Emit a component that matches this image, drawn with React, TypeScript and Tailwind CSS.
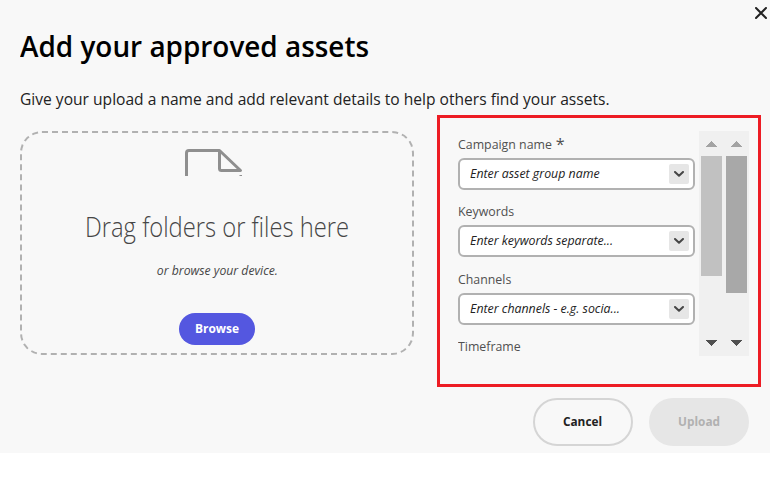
const FIELDS = [
  { label: "Campaign name", required: true, placeholder: "Enter asset group name", gap: "mb-2" },
  { label: "Keywords", required: false, placeholder: "Enter keywords separate...", gap: "mb-[9px]" },
  { label: "Channels", required: false, placeholder: "Enter channels - e.g. socia...", gap: "mb-2" },
];

function CloseIcon() {
  return (
    <svg width="12" height="12" viewBox="0 0 12 12" fill="none" stroke="#222222" strokeWidth="2" strokeLinecap="round">
      <path d="M1 1 L11 11 M11 1 L1 11" />
    </svg>
  );
}

function DocumentIcon() {
  return (
    <svg width="58" height="28" viewBox="0 0 58 28" fill="none" stroke="#8f8f8f" strokeWidth="3" strokeLinejoin="round">
      <path d="M1.5 27 V4 Q1.5 1.5 4 1.5 H34.5 L55.5 21.5 H36.5 Q34.5 21.5 34.5 19.5 V1.5" />
      <path d="M54.5 26.5 H57" strokeWidth="1" />
    </svg>
  );
}

function Chevron() {
  return (
    <svg width="10" height="6" viewBox="0 0 10 6" fill="none" stroke="#464646" strokeWidth="2" strokeLinecap="round" strokeLinejoin="round">
      <path d="M1 1 L5 4.8 L9 1" />
    </svg>
  );
}

function FieldLabel({ text, required = false }: { text: string; required?: boolean }) {
  return (
    <label className="flex h-[27px] origin-left scale-x-95 items-center gap-1 pb-0.5 text-[13px] leading-5 text-[#505050]">
      {text}
      {required && <span className="text-[17px]">*</span>}
    </label>
  );
}

function ScrollBar({ thumb }: { thumb: string }) {
  return (
    <div className="flex h-[225px] w-[25px] flex-col items-center bg-[#f0f0f0]">
      <svg className="mt-2.5 mb-[9px] shrink-0" width="11" height="6" viewBox="0 0 11 6" shapeRendering="crispEdges">
        <path d="M5.5 0 L11 6 H0 Z" fill="#a3a3a3" />
      </svg>
      <div className={`w-[21px] ${thumb}`} />
      <svg className="mt-auto mb-2.5 shrink-0" width="11" height="6" viewBox="0 0 11 6" shapeRendering="crispEdges">
        <path d="M0 0 H11 L5.5 6 Z" fill="#505050" />
      </svg>
    </div>
  );
}

export default function App() {
  return (
    <div className="h-[488px] w-[770px] overflow-hidden bg-white font-['Open_Sans','Noto_Sans',sans-serif] whitespace-nowrap">
      <main className="flex h-[453px] flex-col bg-[#f8f8f8]">
        <header className="flex h-[115px] justify-between pl-5">
          <div className="flex flex-col items-start">
            <h1 className="mt-[26px] origin-left scale-x-[0.962] text-[29px] leading-10 font-semibold text-black">Add your approved assets</h1>
            <p className="mt-[21px] origin-left scale-x-[0.917] text-[17px] leading-6 text-[#222222]">
              Give your upload a name and add relevant details to help others find your assets.
            </p>
          </div>
          <button aria-label="Close" className="mt-[7px] mr-[3px] h-3">
            <CloseIcon />
          </button>
        </header>

        <div className="flex pl-5">
          <section className="mt-4 flex h-[224px] w-[394px] flex-col items-center rounded-[22px] border-2 border-dashed border-[#b1b1b1]">
            <div className="mt-4 mr-1.5 h-7">
              <DocumentIcon />
            </div>
            <h2 className="mt-[30px] scale-x-[0.88] text-[27px] leading-10 font-light text-[#464646]">Drag folders or files here</h2>
            <p className="mt-[13px] scale-x-94 text-[13px] leading-5 text-[#464646] italic">or browse your device.</p>
            <button className="mt-[33px] flex h-8 w-[76px] items-center justify-center rounded-full bg-[#5457e0] pb-0.5 text-[13px] leading-none font-bold text-white">
              <span className="scale-x-[0.92]">Browse</span>
            </button>
          </section>

          <section className="ml-[23px] flex h-[272px] w-[324px] border-[3px] border-[#ed1c24] pt-[13px] pl-[18px]">
            <div className="w-[237px]">
              {FIELDS.map((f) => (
                <div key={f.label} className={f.gap}>
                  <FieldLabel text={f.label} required={f.required} />
                  <div className="flex h-8 items-center justify-between rounded-md border-2 border-[#b1b1b1] bg-white pr-1 pl-2.5">
                    <span className="origin-left scale-x-95 pb-0.5 text-[13px] leading-5 text-[#222222] italic">{f.placeholder}</span>
                    <button aria-label="Show options" className="flex size-5 items-center justify-center rounded-xs bg-[#e6e6e6]">
                      <Chevron />
                    </button>
                  </div>
                </div>
              ))}
              <FieldLabel text="Timeframe" />
            </div>
            <div className="ml-1 flex h-[225px]">
              <ScrollBar thumb="h-[120px] bg-[#c1c1c1]" />
              <ScrollBar thumb="h-[137px] bg-[#a8a8a8]" />
            </div>
          </section>
        </div>

        <footer className="mt-[11px] flex justify-end gap-4 pr-[21px] text-[13px] leading-none font-bold">
          <button className="flex h-12 w-[100px] items-center justify-center rounded-full border-2 border-[#d5d5d5] pb-0.5 text-[#222222]">
            <span className="scale-x-[0.91]">Cancel</span>
          </button>
          <button className="flex h-12 w-[100px] items-center justify-center rounded-full bg-[#e6e6e6] pb-0.5 text-[#b1b1b1]">
            <span className="scale-x-[0.91]">Upload</span>
          </button>
        </footer>
      </main>
    </div>
  );
}
